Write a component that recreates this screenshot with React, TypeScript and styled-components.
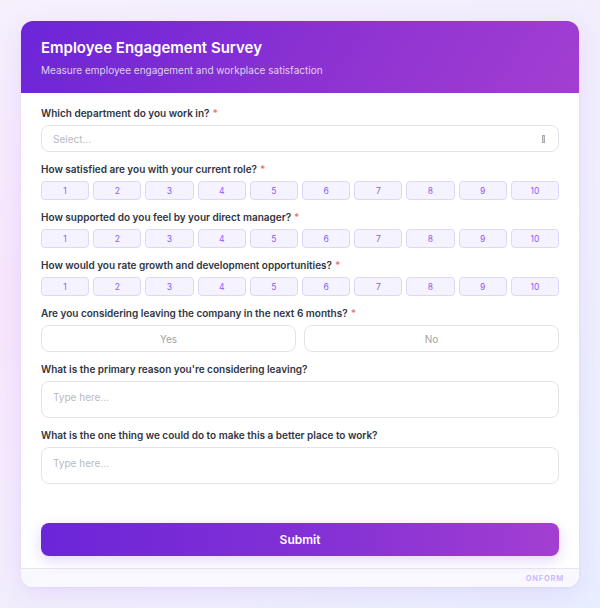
import React from "react";
import styled, { createGlobalStyle } from "styled-components";

const Global = createGlobalStyle`
  html, body { margin: 0; padding: 0; }
  body {
    font-family: Inter, "Noto Sans", sans-serif;
    background: linear-gradient(135deg, #f6f0fc 0%, #f2eefc 50%, #eef1fe 100%);
    min-height: 608px;
  }
  * { box-sizing: border-box; }
`;

const Page = styled.div`
  padding: 21px;
  min-height: 608px;
  background:
    radial-gradient(circle at 0% 50%, rgba(248, 228, 252, 0.8), transparent 45%),
    radial-gradient(circle at 100% 100%, rgba(232, 238, 255, 0.9), transparent 45%);
`;

const Card = styled.div`
  width: 558px;
  background: #fff;
  border-radius: 12px;
  overflow: hidden;
  box-shadow: 0 8px 28px rgba(124, 58, 237, 0.1), 0 1px 3px rgba(124, 58, 237, 0.06);
`;

const Header = styled.div`
  height: 72px;
  padding: 17px 20px 0;
  background: linear-gradient(120deg, #6b25d8 0%, #8a31d2 50%, #a33ed1 100%);
  color: #fff;
`;

const Title = styled.h1`
  margin: 0;
  font-size: 15px;
  line-height: 20px;
  font-weight: 600;
`;

const Subtitle = styled.p`
  margin: 5px 0 0;
  font-size: 10px;
  line-height: 14px;
  color: rgba(255, 255, 255, 0.78);
`;

const Body = styled.div`
  padding: 13px 20px 12px;
  display: flex;
  flex-direction: column;
  gap: 10px;
`;

const Group = styled.div`
  display: flex;
  flex-direction: column;
  gap: 5px;
`;

const Label = styled.div`
  font-size: 10px;
  line-height: 14px;
  font-weight: 600;
  color: #2f3542;
`;

const Req = styled.span`
  color: #f87171;
  margin-left: 3px;
`;

const Select = styled.div`
  height: 27px;
  border: 1.5px solid #e3e3ea;
  border-radius: 8px;
  display: flex;
  align-items: center;
  justify-content: space-between;
  padding: 0 13px 0 11px;
  font-size: 10px;
  color: #b9b9c4;
`;

const Caret = styled.span`
  width: 3px;
  height: 8px;
  border: 1px solid #a8a8b0;
  background: #d8d8dc;
`;

const Scale = styled.div`
  display: grid;
  grid-template-columns: repeat(10, 1fr);
  gap: 4px;
`;

const ScaleBtn = styled.div`
  height: 19px;
  border: 1px solid #ddd6fe;
  background: #f5f3ff;
  border-radius: 4px;
  display: flex;
  align-items: center;
  justify-content: center;
  font-size: 8.5px;
  color: #8b5cf6;
`;

const Choices = styled.div`
  display: grid;
  grid-template-columns: 1fr 1fr;
  gap: 8px;
`;

const Choice = styled.div`
  height: 27px;
  border: 1.5px solid #e3e3ea;
  border-radius: 8px;
  display: flex;
  align-items: center;
  justify-content: center;
  font-size: 10px;
  color: #a2a2ac;
`;

const TextArea = styled.div`
  height: 37px;
  border: 1.5px solid #e3e3ea;
  border-radius: 8px;
  padding: 8px 11px;
  font-size: 10px;
  line-height: 14px;
  color: #b9b9c4;
`;

const Submit = styled.button`
  margin-top: 29px;
  height: 33px;
  border: none;
  border-radius: 8px;
  background: linear-gradient(90deg, #6b25d8 0%, #8431d5 55%, #a33ed1 100%);
  color: #fff;
  font-family: Inter, sans-serif;
  font-size: 12px;
  font-weight: 600;
  box-shadow: 0 4px 14px rgba(124, 58, 237, 0.22);
`;

const Footer = styled.div`
  height: 19px;
  border-top: 1px solid #e8e5f0;
  background: #faf8ff;
  display: flex;
  align-items: center;
  justify-content: flex-end;
  padding-right: 15px;
  font-size: 7.5px;
  font-weight: 600;
  letter-spacing: 0.8px;
  color: #c4b5fd;
`;

const ScaleRow = () => (
  <Scale>
    {Array.from({ length: 10 }, (_, i) => (
      <ScaleBtn key={i}>{i + 1}</ScaleBtn>
    ))}
  </Scale>
);

export default function App() {
  return (
    <>
      <Global />
      <Page>
        <Card>
          <Header>
            <Title>Employee Engagement Survey</Title>
            <Subtitle>Measure employee engagement and workplace satisfaction</Subtitle>
          </Header>
          <Body>
            <Group>
              <Label>
                Which department do you work in?<Req>*</Req>
              </Label>
              <Select>
                <span>Select...</span>
                <Caret />
              </Select>
            </Group>
            <Group>
              <Label>
                How satisfied are you with your current role?<Req>*</Req>
              </Label>
              <ScaleRow />
            </Group>
            <Group>
              <Label>
                How supported do you feel by your direct manager?<Req>*</Req>
              </Label>
              <ScaleRow />
            </Group>
            <Group>
              <Label>
                How would you rate growth and development opportunities?<Req>*</Req>
              </Label>
              <ScaleRow />
            </Group>
            <Group>
              <Label>
                Are you considering leaving the company in the next 6 months?<Req>*</Req>
              </Label>
              <Choices>
                <Choice>Yes</Choice>
                <Choice>No</Choice>
              </Choices>
            </Group>
            <Group>
              <Label>What is the primary reason you're considering leaving?</Label>
              <TextArea>Type here...</TextArea>
            </Group>
            <Group>
              <Label>What is the one thing we could do to make this a better place to work?</Label>
              <TextArea>Type here...</TextArea>
            </Group>
            <Submit>Submit</Submit>
          </Body>
          <Footer>ONFORM</Footer>
        </Card>
      </Page>
    </>
  );
}
